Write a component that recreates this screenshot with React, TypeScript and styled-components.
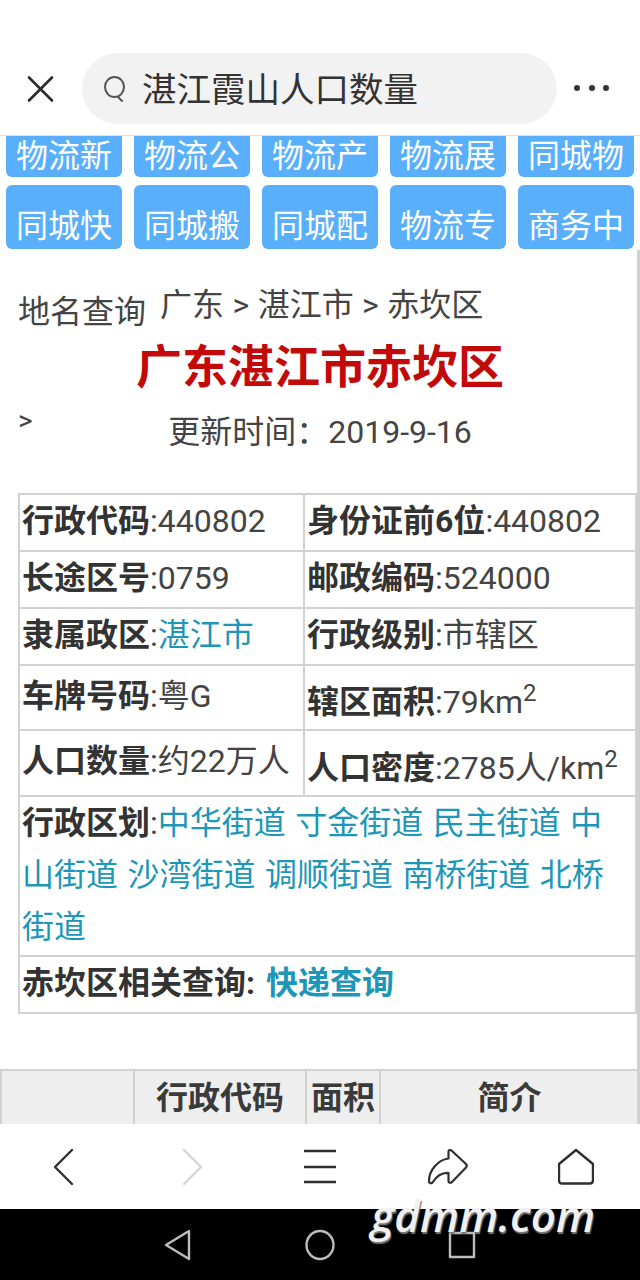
import React from 'react';
import styled, { createGlobalStyle } from 'styled-components';

const GlobalStyle = createGlobalStyle`
  html, body {
    margin: 0;
    padding: 0;
    background: #fff;
    font-family: Roboto, "Noto Sans CJK SC", "Liberation Sans", sans-serif;
  }
`;

const row1 = ['物流新', '物流公', '物流产', '物流展', '同城物'];
const row2 = ['同城快', '同城搬', '同城配', '物流专', '商务中'];

const App = () => {
  return (
    <Page>
      <GlobalStyle />
      <TopBar>
        <IconBtn>
          <svg width="30" height="30" viewBox="0 0 30 30" fill="none" stroke="#2b2b2b" strokeWidth="2.6" strokeLinecap="round">
            <path d="M3 3.5 L26 26.5 M26 3.5 L3 26.5" />
          </svg>
        </IconBtn>
        <SearchPill>
          <svg width="24" height="30" viewBox="0 0 24 30" fill="none" stroke="#555" strokeWidth="2">
            <ellipse cx="11.5" cy="13" rx="9.5" ry="10" />
            <path d="M15 23 L19 27" strokeLinecap="round" />
          </svg>
          <SearchText>湛江霞山人口数量</SearchText>
        </SearchPill>
        <Dots>
          <i />
          <i />
          <i />
        </Dots>
      </TopBar>

      <Content>
        <TileRow $clipped>
          {row1.map((t) => (
            <Tile key={t} $clipped>{t}</Tile>
          ))}
        </TileRow>
        <TileRow>
          {row2.map((t) => (
            <Tile key={t}>{t}</Tile>
          ))}
        </TileRow>

        <Crumbs>
          <CrumbLabel>地名查询</CrumbLabel>
          <CrumbPath>广东 &gt; 湛江市 &gt; 赤坎区</CrumbPath>
        </Crumbs>
        <Title>广东湛江市赤坎区</Title>
        <UpdateRow>
          <Arrow>&gt;</Arrow>
          <Updated>更新时间：2019-9-16</Updated>
        </UpdateRow>

        <InfoTable>
          <colgroup>
            <col width="285" />
            <col />
          </colgroup>
          <tbody>
            <InfoRow $h={57}>
              <td><Label>行政代码</Label>:440802</td>
              <td><Label>身份证前6位</Label>:440802</td>
            </InfoRow>
            <InfoRow $h={57}>
              <td><Label>长途区号</Label>:0759</td>
              <td><Label>邮政编码</Label>:524000</td>
            </InfoRow>
            <InfoRow $h={57}>
              <td><Label>隶属政区</Label>:<Link>湛江市</Link></td>
              <td><Label>行政级别</Label>:市辖区</td>
            </InfoRow>
            <InfoRow $h={65}>
              <td><Label>车牌号码</Label>:粤G</td>
              <td><Label>辖区面积</Label>:79km<Sup>2</Sup></td>
            </InfoRow>
            <InfoRow $h={66}>
              <td><Label>人口数量</Label>:约22万人</td>
              <td><Label>人口密度</Label>:2785人/km<Sup>2</Sup></td>
            </InfoRow>
            <InfoRow $h={160}>
              <WrapCell colSpan={2}>
                <Label>行政区划</Label>:<Link>中华街道 寸金街道 民主街道 中山街道 沙湾街道 调顺街道 南桥街道 北桥街道</Link>
              </WrapCell>
            </InfoRow>
            <InfoRow $h={57}>
              <td colSpan={2}>
                <Label>赤坎区相关查询: </Label><Link $bold>快递查询</Link>
              </td>
            </InfoRow>
          </tbody>
        </InfoTable>

        <HeadTable>
          <colgroup>
            <col width="133" />
            <col width="172" />
            <col width="74" />
            <col />
          </colgroup>
          <tbody>
            <tr>
              <th></th>
              <th>行政代码</th>
              <th>面积</th>
              <th>简介</th>
            </tr>
          </tbody>
        </HeadTable>
      </Content>

      <ScrollThumb />

      <BottomNav>
        <svg width="24" height="38" viewBox="0 0 24 38" fill="none" stroke="#2f2f2f" strokeWidth="2.4" strokeLinecap="round" strokeLinejoin="round">
          <path d="M20 2 L3 19 L20 36" />
        </svg>
        <svg width="24" height="38" viewBox="0 0 24 38" fill="none" stroke="#d4d4d4" strokeWidth="2.4" strokeLinecap="round" strokeLinejoin="round">
          <path d="M4 2 L21 19 L4 36" />
        </svg>
        <svg width="32" height="36" viewBox="0 0 32 36" fill="none" stroke="#2f2f2f" strokeWidth="2.4">
          <path d="M0 2 H32 M0 18 H32 M0 33 H32" />
        </svg>
        <svg width="42" height="38" viewBox="0 0 42 38" fill="none" stroke="#2f2f2f" strokeWidth="2.2" strokeLinecap="round" strokeLinejoin="round">
          <path d="M24.5 2.5 L39 16 Q40.5 18 39 19.5 L25 34 C23 35.5 21.5 34.5 21.5 33 L21.5 25 C14 24.5 9 29 5.5 34.5 C3.5 36 2 35 2 33 C2 22 11 12 21.5 10.5 L21.5 4 C21.5 2 23 1.5 24.5 2.5 Z" />
        </svg>
        <svg width="36" height="38" viewBox="0 0 36 38" fill="none" stroke="#2f2f2f" strokeWidth="2.4" strokeLinecap="round" strokeLinejoin="round">
          <path d="M18 2 L35 16 V32 C35 34.5 34 35.5 32 35.5 H4 C2 35.5 1 34.5 1 32 V16 Z" />
        </svg>
      </BottomNav>

      <SystemBar>
        <svg width="28" height="32" viewBox="0 0 28 32" fill="none" stroke="#bdbdbd" strokeWidth="2.4" strokeLinejoin="round">
          <path d="M25 2 V30 L2 16 Z" />
        </svg>
        <svg width="30" height="32" viewBox="0 0 30 32" fill="none" stroke="#bdbdbd" strokeWidth="2.4">
          <ellipse cx="15" cy="16" rx="13.5" ry="14" />
        </svg>
        <svg width="28" height="28" viewBox="0 0 28 28" fill="none" stroke="#bdbdbd" strokeWidth="2.4" strokeLinejoin="round">
          <rect x="2" y="2" width="24" height="24" />
        </svg>
      </SystemBar>

      <Watermark>gdmm.com</Watermark>
    </Page>
  );
};

const Page = styled.div`
  position: relative;
  width: 640px;
  height: 1280px;
  display: flex;
  flex-direction: column;
  overflow: hidden;
  background: #fff;
`;

const TopBar = styled.div`
  height: 136px;
  flex: none;
  box-sizing: border-box;
  padding: 53px 0 11px 0;
  display: flex;
  align-items: stretch;
  border-bottom: 1px solid #e2e2e2;
`;

const IconBtn = styled.div`
  width: 82px;
  display: flex;
  align-items: center;
  justify-content: center;
`;

const SearchPill = styled.div`
  width: 475px;
  background: #f2f2f2;
  border-radius: 36px;
  display: flex;
  align-items: center;
  padding-left: 21px;
  box-sizing: border-box;
  gap: 15px;
`;

const SearchText = styled.span`
  font-size: 34.5px;
  color: #333;
  line-height: 1;
  position: relative;
  top: 2px;
`;

const Dots = styled.div`
  flex: 1;
  display: flex;
  align-items: center;
  gap: 8.5px;
  padding: 0 0 2px 17px;

  i {
    width: 6px;
    height: 6px;
    border-radius: 50%;
    background: #333;
  }
`;

const Content = styled.div`
  height: 988px;
  overflow: hidden;
  flex: none;
`;

const TileRow = styled.div<{ $clipped?: boolean }>`
  display: flex;
  gap: 12px;
  padding: 0 6px;
  margin-bottom: ${({ $clipped }) => ($clipped ? '8px' : '0')};
`;

const Tile = styled.div<{ $clipped?: boolean }>`
  width: 116px;
  height: ${({ $clipped }) => ($clipped ? '41px' : '64px')};
  box-sizing: border-box;
  padding-top: ${({ $clipped }) => ($clipped ? '0' : '19px')};
  background: #5aaffc;
  border-radius: ${({ $clipped }) => ($clipped ? '0 0 6px 6px' : '6px')};
  color: #fff;
  font-size: 32px;
  line-height: ${({ $clipped }) => ($clipped ? '40px' : '44px')};
  text-align: center;
  white-space: nowrap;
  overflow: hidden;
`;

const Crumbs = styled.div`
  display: flex;
  align-items: flex-start;
  margin: 34px 0 0 18px;
  color: #444;
  height: 50px;
`;

const CrumbLabel = styled.span`
  font-size: 32px;
  line-height: 44px;
  margin-top: 7px;
`;

const CrumbPath = styled.span`
  font-size: 32px;
  line-height: 44px;
  margin: 0 0 0 14px;
  word-spacing: 0.5px;
`;

const Title = styled.h1`
  margin: 3px 0 0;
  height: 59px;
  font-size: 46px;
  line-height: 62px;
  font-weight: 700;
  color: #c20a0a;
  text-align: center;
`;

const UpdateRow = styled.div`
  position: relative;
  height: 98px;
  box-sizing: border-box;
  padding-top: 11px;
  text-align: center;
`;

const Arrow = styled.span`
  position: absolute;
  left: 18px;
  top: 8px;
  font-size: 28px;
  line-height: 36px;
  color: #444;
`;

const Updated = styled.div`
  font-size: 32px;
  line-height: 52px;
  color: #444;
`;

const InfoTable = styled.table`
  border-collapse: collapse;
  table-layout: fixed;
  width: 619px;
  margin: 0 0 0 18px;
  font-size: 32px;
  color: #444;

  td {
    border: 2px solid #d2d2d2;
    padding: 0 2px 4px;
    line-height: 46px;
    vertical-align: middle;
  }
`;

const WrapCell = styled.td`
  && {
    padding: 0 20px 2px 2px;
    line-height: 52px;
    word-break: break-all;
    word-spacing: 1.5px;
  }
`;

const InfoRow = styled.tr<{ $h: number }>`
  height: ${({ $h }) => $h}px;
`;

const Label = styled.b`
  color: #333;
  font-weight: 700;
`;

const Link = styled.span<{ $bold?: boolean }>`
  color: #1e96b8;
  font-weight: ${({ $bold }) => ($bold ? 700 : 400)};
  margin-left: ${({ $bold }) => ($bold ? '3px' : '0')};
`;

const Sup = styled.sup`
  font-size: 24px;
  line-height: 54px;
`;

const HeadTable = styled.table`
  border-collapse: collapse;
  table-layout: fixed;
  width: 640px;
  margin-top: 55px;

  th {
    height: 56px;
    background: #eee;
    border: 2px solid #d2d2d2;
    border-bottom: none;
    padding: 0;
    font-size: 32px;
    line-height: 54px;
    font-weight: 700;
    color: #3a3a3a;
    text-align: center;
    vertical-align: top;
  }
`;

const ScrollThumb = styled.div`
  position: absolute;
  right: 0;
  top: 250px;
  width: 3px;
  height: 874px;
  background: #d0d0d0;
`;

const BottomNav = styled.div`
  height: 85px;
  flex: none;
  display: grid;
  grid-template-columns: repeat(5, 128px);
  align-items: center;
  justify-items: center;
  background: #fff;
`;

const SystemBar = styled.div`
  flex: 1;
  background: #000;
  display: flex;
  align-items: center;
  justify-content: center;
  gap: 113px;
`;

const Watermark = styled.div`
  position: absolute;
  left: 371px;
  top: 1190px;
  font-family: "Open Sans", "Liberation Sans", sans-serif;
  font-size: 44px;
  line-height: 50px;
  font-weight: 600;
  font-style: italic;
  color: #f0f0f0;
  text-shadow: 1px 2px 1px #777;
`;

export default App;
